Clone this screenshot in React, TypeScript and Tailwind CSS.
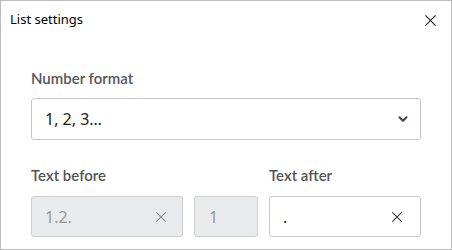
import { ChevronDown } from "lucide-react";

function ClearIcon({ className }: { className?: string }) {
  return (
    <svg viewBox="0 0 14 14" className={className} fill="none" stroke="currentColor" strokeWidth="1.2">
      <path d="M1.5 1.5l11 11M12.5 1.5l-11 11" />
    </svg>
  );
}

export default function App() {
  return (
    <div className="w-[452px] h-[250px] bg-white border border-[#bdbdbd] flex flex-col font-['Noto_Sans',sans-serif]">
      <div className="flex items-center justify-between h-[38px] pl-[9px] pr-[14px]">
        <span className="text-[13px] text-black">List settings</span>
        <ClearIcon className="w-[13px] h-[13px] text-[#222]" />
      </div>

      <div className="flex flex-col px-[30px] pt-[32px]">
        <label className="font-['Lato',sans-serif] text-[15px] font-semibold text-[#555] leading-none">
          Number format
        </label>
        <div className="mt-[12px] h-[42px] flex items-center justify-between rounded-[3px] border border-[#c8c8c8] pl-[13px] pr-[10px]">
          <span className="text-[16px] text-[#222]">1, 2, 3…</span>
          <ChevronDown className="w-[14px] h-[14px] text-[#3d4450]" strokeWidth={3.5} />
        </div>

        <div className="flex gap-[11px] mt-[28px]">
          <div className="flex flex-col">
            <label className="font-['Lato',sans-serif] text-[15px] font-semibold text-[#555] leading-none">
              Text before
            </label>
            <div className="flex gap-[11px] mt-[13px]">
              <div className="w-[152px] h-[41px] flex items-center justify-between rounded-[3px] border border-[#cfcfcf] bg-[#e9eaec] pl-[13px] pr-[15px]">
                <span className="text-[16px] text-[#999]">1.2.</span>
                <ClearIcon className="w-[12px] h-[12px] text-[#8a8a8a]" />
              </div>
              <div className="w-[64px] h-[41px] flex items-center rounded-[3px] border border-[#cfcfcf] bg-[#e9eaec] pl-[14px]">
                <span className="text-[16px] text-[#999]">1</span>
              </div>
            </div>
          </div>
          <div className="flex flex-col">
            <label className="font-['Lato',sans-serif] text-[15px] font-semibold text-[#555] leading-none">
              Text after
            </label>
            <div className="mt-[13px] w-[152px] h-[41px] flex items-center justify-between rounded-[3px] border border-[#c8c8c8] bg-white pl-[13px] pr-[17px]">
              <span className="text-[16px] text-[#222]">.</span>
              <ClearIcon className="w-[12px] h-[12px] text-[#333]" />
            </div>
          </div>
        </div>
      </div>
    </div>
  );
}
